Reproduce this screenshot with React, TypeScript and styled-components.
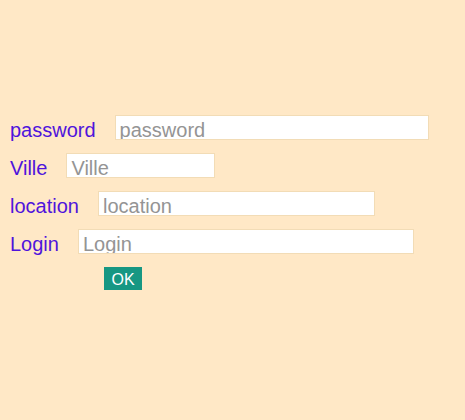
import React from "react";
import styled, { createGlobalStyle } from "styled-components";

const Global = createGlobalStyle`
  html, body {
    margin: 0;
    padding: 0;
    background: #ffe8c6;
    font-family: "Liberation Sans", Arial, sans-serif;
  }
`;

const Page = styled.div`
  width: 465px;
  height: 420px;
  box-sizing: border-box;
  padding: 115px 10px 0 10px;
  background: #ffe8c6;
  display: flex;
  flex-direction: column;
  gap: 13px;
`;

const Row = styled.div`
  display: flex;
  align-items: flex-start;
  height: 25px;
  gap: 19px;
`;

const Label = styled.label`
  font-size: 20px;
  color: #4f14dc;
  line-height: 25px;
  padding-top: 3px;
`;

const Field = styled.input<{ $w: number }>`
  box-sizing: border-box;
  width: ${(p) => p.$w}px;
  height: 25px;
  margin: 0;
  padding: 6px 4px 0 4px;
  border: 1px solid #f2dcb6;
  background: #ffffff;
  font-family: "Liberation Sans", Arial, sans-serif;
  font-size: 20px;
  line-height: 18px;
  color: #333;
  outline: none;
  &::placeholder {
    color: #949494;
  }
`;

const Submit = styled.button`
  margin-left: 94px;
  width: 38px;
  height: 23px;
  padding: 2px 0 0 0;
  border: none;
  background: #179783;
  color: #ffffff;
  font-family: "Liberation Sans", Arial, sans-serif;
  font-size: 16px;
  line-height: 21px;
  align-self: flex-start;
`;

const fields = [
  { name: "password", w: 314 },
  { name: "Ville", w: 149 },
  { name: "location", w: 277 },
  { name: "Login", w: 336 },
];

export default function App() {
  return (
    <>
      <Global />
      <Page>
        {fields.map((f) => (
          <Row key={f.name}>
            <Label>{f.name}</Label>
            <Field $w={f.w} placeholder={f.name} />
          </Row>
        ))}
        <Submit>OK</Submit>
      </Page>
    </>
  );
}
